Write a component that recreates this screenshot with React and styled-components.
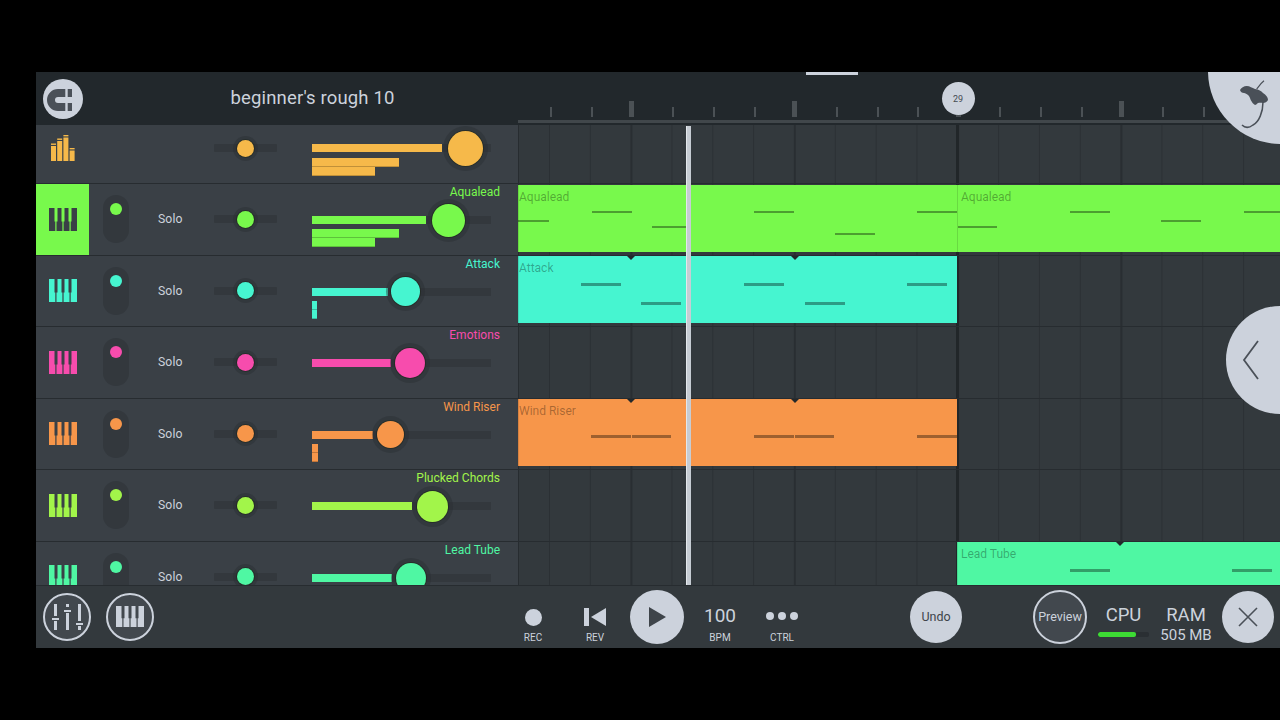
import React from 'react';
import styled, { createGlobalStyle } from 'styled-components';

const Global = createGlobalStyle`
  html, body { margin: 0; padding: 0; background: #000; }
  body { font-family: Roboto, "Liberation Sans", sans-serif; }
  * { box-sizing: border-box; }
`;
const LIGHT = '#ccd2dc';
const Page = styled.div`
  width: 1280px; height: 720px; background: #000; padding: 72px 0 0 36px; overflow: hidden;
`;
const Shell = styled.div`
  position: relative; width: 1244px; height: 576px; overflow: hidden;
  display: flex; flex-direction: column; background: #33393d;
`;
const Header = styled.header`
  height: 53px; flex: none; display: flex; background: #22282c;
`;
const TitleArea = styled.div`
  width: 482px; flex: none; display: flex; align-items: center; padding-left: 7px;
`;
const MagnetButton = styled.button`
  width: 40px; height: 40px; margin: 0 148px 0 0; padding: 0; border: 0; border-radius: 50%;
  background: ${LIGHT}; display: flex;
`;
const Title = styled.h1`
  margin: 0; font-size: 18.5px; font-weight: 400; color: ${LIGHT}; letter-spacing: .15px;
  position: relative; top: -1px; left: -.5px;
`;
const Ruler = styled.div`
  flex: 1; display: flex; flex-direction: column; justify-content: flex-end;
`;
const Ticks = styled.div`
  display: flex; align-items: flex-end; padding-left: 32px; height: 16px; margin-bottom: 3px;
`;
const Tick = styled.span`
  flex: 0 0 40.83px; height: ${p => (p.$major ? 16 : 10)}px; display: block;
  &::before {
    content: ''; display: block; height: 100%; background: #4b5155;
    width: ${p => (p.$major ? 5 : 2)}px; margin-left: ${p => (p.$major ? -2.5 : 0)}px;
  }
`;
const RulerLine = styled.div`
  height: 3px; margin-bottom: 2px; background: #41474b;
`;
const Scrollbar = styled.div`
  position: absolute; left: 770px; top: 0; width: 52px; height: 3px; background: ${LIGHT};
`;
const MarkerBadge = styled.div`
  position: absolute; left: 905.5px; top: 10px; width: 33px; height: 33px; border-radius: 50%;
  background: ${LIGHT}; color: #454b52; font-size: 9px;
  display: flex; align-items: center; justify-content: center;
`;
const LogoDisc = styled.div`
  position: absolute; left: 1172px; top: -74px; width: 146px; height: 146px; border-radius: 50%;
  background: ${LIGHT};
`;
const LogoMark = styled.svg`
  position: absolute; left: 30px; top: 82px; width: 34px; height: 50px;
`;
const BackDisc = styled.div`
  position: absolute; left: 1190px; top: 234px; width: 108px; height: 108px; border-radius: 50%;
  background: ${LIGHT};
`;
const BackChevron = styled.svg`
  position: absolute; left: 16px; top: 34px; width: 18px; height: 40px;
`;
const Main = styled.main`
  position: relative; flex: 1; min-height: 0; overflow: hidden;
`;
const Row = styled.div`
  height: ${p => (p.$master ? 59 : 71.5)}px; display: flex; border-bottom: 1px solid #272c30;
`;
const Channel = styled.div`
  width: 482px; flex: none; background: #3a4046; display: grid; align-items: center;
  grid-template-columns: 53px 69px 56px 98px 188px;
`;
const IconCell = styled.div`
  align-self: stretch; display: flex; align-items: center; justify-content: center;
  padding-bottom: ${p => (p.$master ? 12 : 0)}px;
  background: ${p => (p.$active ? p.$color : 'transparent')};
`;
const Switch = styled.div`
  width: 26px; height: 48px; margin-left: 14px; border-radius: 13px; background: #33383d;
  display: flex; justify-content: center; padding-top: 8px;
`;
const Led = styled.span`
  width: 12px; height: 12px; border-radius: 50%; background: ${p => p.$color};
`;
const Solo = styled.span`
  font-size: 12.2px; color: ${LIGHT}; letter-spacing: .1px;
`;
const Slot = styled.div``;
const PanTrack = styled.div`
  position: relative; width: 63px; height: 8px; background: #33383d; border-radius: 1px;
  margin-top: ${p => (p.$master ? -12 : 0)}px;
`;
const Knob = styled.span`
  position: absolute; top: 4px; left: ${p => p.$x}px; width: ${p => p.$d}px; height: ${p => p.$d}px;
  margin: ${p => -p.$d / 2}px 0 0 ${p => -p.$d / 2}px; border-radius: 50%; background: ${p => p.$color};
  box-shadow: 0 0 0 1px rgba(20,30,10,.35), 0 0 0 ${p => (p.$d > 20 ? 5 : 4)}px rgba(42,47,51,.45);
`;
const Mixer = styled.div`
  align-self: stretch; display: flex; flex-direction: column; padding-top: ${p => (p.$master ? 19 : 1)}px;
`;
const Name = styled.div`
  height: 14px; line-height: 14px; font-size: 12px; text-align: right; color: ${p => p.$color};
  margin-bottom: 17px;
`;
const VolTrack = styled.div`
  position: relative; width: 179px; height: 8px; flex: none; background: #33383d;
  margin-bottom: ${p => p.$gap}px;
`;
const VolFill = styled.div`
  width: ${p => p.$w}px; height: 100%; background: ${p => p.$color};
`;
const SubBar = styled.div`
  width: ${p => p.$w}px; height: ${p => p.$h}px; flex: none; background: ${p => p.$color};
  border-bottom: 1px solid rgba(0,0,0,.22);
`;
const Track = styled.div`
  position: relative; flex: 1; overflow: hidden;
  background-color: #33393d;
  background-image:
    linear-gradient(90deg, #272c30 0 1px, transparent 1px),
    linear-gradient(90deg, #212629 0 3px, transparent 3px),
    linear-gradient(90deg, #292e32 0 2px, transparent 2px),
    linear-gradient(90deg, #2b3034 0 1px, transparent 1px);
  background-size: 100% 100%, 100% 100%, 163.33px 100%, 40.83px 100%;
  background-position: 0 0, 437.5px 0, 112.5px 0, 31px 0;
  background-repeat: no-repeat, no-repeat, repeat-x, repeat-x;
`;
const Clip = styled.div`
  position: absolute; top: .5px; bottom: 3px; left: ${p => p.$x}px; width: ${p => p.$w}px;
  background: ${p => p.$color}; padding: 5px 0 0 ${p => p.$pad}px;
  font-size: 12px; line-height: 14px; color: rgba(0,0,0,.32);
  box-shadow: inset 1px 0 0 rgba(0,0,0,.12);
`;
const Note = styled.span`
  position: absolute; left: ${p => p.$x}px; top: ${p => p.$y - 1}px; width: ${p => p.$w}px; height: 2.5px;
  background: rgba(0,0,0,.36);
`;
const Notch = styled.span`
  position: absolute; left: ${p => p.$x}px; top: 0; width: 0; height: 0; margin-left: -4px;
  border: 4px solid transparent; border-top-color: #23282b; border-bottom: 0;
`;
const Playhead = styled.div`
  position: absolute; left: 650px; top: 1px; bottom: 0; width: 5px; background: #c6ccd3;
  box-shadow: inset 1px 0 0 #e4e8ec;
`;
const Footer = styled.footer`
  height: 63px; flex: none; display: flex; align-items: center; padding: 0 6px 1px 7px;
  background: #33393d; border-top: 1px solid #272c30;
`;
const RingButton = styled.button`
  width: ${p => p.$d}px; height: ${p => p.$d}px; flex: none; padding: 0; margin: 0 ${p => p.$mr}px 0 0;
  border-radius: 50%; border: 2px solid ${LIGHT}; background: #42484e; color: ${LIGHT};
  display: flex; align-items: center; justify-content: center;
  font: 400 12.5px Roboto, sans-serif;
`;
const FillButton = styled.button`
  width: ${p => p.$d}px; height: ${p => p.$d}px; flex: none; padding: 0; margin: 0 ${p => p.$mr}px 0 0;
  border-radius: 50%; border: 0; background: ${LIGHT}; color: #3e444a;
  display: flex; align-items: center; justify-content: center;
  font: 400 12.5px Roboto, sans-serif;
`;
const Transport = styled.div`
  width: 50px; height: 46px; flex: none; margin-right: ${p => p.$mr}px; margin-top: 11px;
  display: flex; flex-direction: column; align-items: center; color: ${LIGHT};
`;
const TransportTop = styled.div`
  height: 32px; display: flex; align-items: center; justify-content: center;
  font-size: 19px;
`;
const TransportLabel = styled.div`
  font-size: 10px; line-height: 12px; color: ${LIGHT}; margin-top: 1px;
`;
const RecDot = styled.span`
  width: 17px; height: 17px; margin-top: 4px; border-radius: 50%; background: ${LIGHT};
`;
const RevIcon = styled.svg`
  width: 22px; height: 18px; margin-top: 4px;
`;
const Dots = styled.div`
  display: flex; gap: 4px; margin-top: 2px;
`;
const Dot = styled.span`
  width: 8px; height: 8px; border-radius: 50%; background: ${LIGHT};
`;
const Spacer = styled.div`
  width: ${p => p.$w}px; flex: none;
`;
const Stat = styled.div`
  flex: none; width: ${p => p.$w}px; margin-right: ${p => p.$mr}px; height: 46px; margin-top: 18px;
  display: flex; flex-direction: column; align-items: center; color: ${LIGHT};
  font-size: 18.5px; line-height: 24px;
`;
const StatSub = styled.div`
  font-size: 15px; line-height: 16px; white-space: nowrap;
`;
const Meter = styled.div`
  width: 51px; height: 5px; margin-top: 5px; border-radius: 2px; background: #2a2f33; overflow: hidden;
`;
const MeterFill = styled.div`
  width: 38px; height: 100%; background: #3ddb34; border-radius: 2px;
`;

const Piano = ({ color, width = 28, height = 23 }) => (
  <svg width={width} height={height} viewBox="0 0 28 24" preserveAspectRatio="none" fill={color}>
    <path d="M0 0H5.5V14H6.3V24H0Z" />
    <path d="M8.5 0H12.5V14H13.4V24H7.5V14H8.5Z" />
    <path d="M15.5 0H19.5V14H20.5V24H14.6V14H15.5Z" />
    <path d="M22.5 0H28V24H21.7V14H22.5Z" />
  </svg>
);
const BarsIcon = ({ color }) => (
  <svg width="24" height="26" viewBox="0 0 24 26" fill={color}>
    <rect x="0" y="8.5" width="5" height="1.4" /><rect x="0" y="11" width="5" height="15" />
    <rect x="6.2" y="3.5" width="5" height="1.4" /><rect x="6.2" y="6" width="5" height="20" />
    <rect x="12.4" y="0" width="5" height="1.4" /><rect x="12.4" y="2.5" width="5" height="23.5" />
    <rect x="18.6" y="13" width="5" height="1.4" /><rect x="18.6" y="15.5" width="5" height="10.5" />
  </svg>
);
const Magnet = () => (
  <svg width="40" height="40" viewBox="0 0 40 40">
    <path d="M22.3 14H15a7 7 0 0 0 0 14h7.3" fill="none" stroke="#4a5058" strokeWidth="8" />
    <rect x="24.7" y="10" width="4.3" height="8" fill="#4a5058" />
    <rect x="24.7" y="24" width="4.3" height="8" fill="#4a5058" />
  </svg>
);
const MixerIcon = () => (
  <svg width="44" height="44" viewBox="0 0 44 44" fill={LIGHT}>
    <rect x="9" y="9" width="3" height="12" /><rect x="7" y="23" width="7" height="2" /><rect x="9" y="26" width="3" height="9" />
    <rect x="21" y="9" width="3" height="3" /><rect x="19" y="15" width="7" height="2" /><rect x="21" y="18" width="3" height="17" />
    <rect x="33" y="9" width="3" height="17" /><rect x="31" y="28" width="7" height="2" /><rect x="33" y="31" width="3" height="4" />
  </svg>
);

const tracks = [
  { name: 'Aqualead', color: '#78f94c', active: true, fill: 114, kx: 136, kd: 33, subs: [[87, 9], [63, 9]],
    clips: [
      { x: 0, w: 439, pad: 1, notes: [[0, 31, 36], [74, 40, 27], [134, 38, 42], [236, 40, 27], [317, 40, 49], [399, 40, 27]], notches: [] },
      { x: 439, w: 323, pad: 4, notes: [[1, 39, 42], [113, 40, 27], [204, 40, 36], [287, 40, 27]], notches: [] },
    ] },
  { name: 'Attack', color: '#46f5d0', fill: 76, kx: 93, kd: 29, subs: [[5, 9], [5, 9]],
    clips: [{ x: 0, w: 439, pad: 1, notes: [[63, 40, 28], [123, 40, 47], [226, 40, 28], [287, 40, 47], [389, 40, 28]], notches: [113, 277] }] },
  { name: 'Emotions', color: '#f74cad', fill: 79, kx: 98, kd: 30, subs: [], clips: [] },
  { name: 'Wind Riser', color: '#f7964a', fill: 61, kx: 78, kd: 27, subs: [[6, 9], [6, 9]],
    clips: [{ x: 0, w: 439, pad: 1, notes: [[73, 40, 37], [114, 39, 37], [236, 40, 37], [277, 39, 37], [399, 40, 37]], notches: [113, 277] }] },
  { name: 'Plucked Chords', color: '#a2f54a', fill: 100, kx: 120, kd: 31, subs: [], clips: [] },
  { name: 'Lead Tube', color: '#4ff7a3', fill: 80, kx: 99, kd: 30, subs: [],
    clips: [{ x: 439, w: 323, pad: 4, notes: [[113, 40, 28], [275, 40, 28]], notches: [163] }] },
];

const YELLOW = '#f6b94a';

export default function App() {
  return (
    <Page>
      <Global />
      <Shell>
        <Header>
          <TitleArea>
            <MagnetButton aria-label="Snap"><Magnet /></MagnetButton>
            <Title>beginner's rough 10</Title>
          </TitleArea>
          <Ruler>
            <Ticks>
              {Array.from({ length: 19 }, (_, i) => <Tick key={i} $major={i % 4 === 2} />)}
            </Ticks>
            <RulerLine />
          </Ruler>
        </Header>
        <Main>
          <Row $master>
            <Channel>
              <IconCell $master><BarsIcon color={YELLOW} /></IconCell>
              <Slot /><Slot />
              <PanTrack $master><Knob $x={31.5} $d={17} $color={YELLOW} /></PanTrack>
              <Mixer $master>
                <VolTrack $gap={6}>
                  <VolFill $w={130} $color={YELLOW} />
                  <Knob $x={153} $d={35} $color={YELLOW} />
                </VolTrack>
                <SubBar $w={87} $h={9} $color={YELLOW} />
                <SubBar $w={63} $h={9} $color={YELLOW} />
              </Mixer>
            </Channel>
            <Track />
          </Row>
          {tracks.map(t => (
            <Row key={t.name}>
              <Channel>
                <IconCell $active={t.active} $color={t.color}>
                  <Piano color={t.active ? '#3a4046' : t.color} />
                </IconCell>
                <Switch><Led $color={t.color} /></Switch>
                <Solo>Solo</Solo>
                <PanTrack><Knob $x={31.5} $d={17} $color={t.color} /></PanTrack>
                <Mixer>
                  <Name $color={t.color}>{t.name}</Name>
                  <VolTrack $gap={5}>
                    <VolFill $w={t.fill} $color={t.color} />
                    <Knob $x={t.kx} $d={t.kd} $color={t.color} />
                  </VolTrack>
                  {t.subs.map(([w, h], i) => <SubBar key={i} $w={w} $h={h} $color={t.color} />)}
                </Mixer>
              </Channel>
              <Track>
                {t.clips.map(c => (
                  <Clip key={c.x} $x={c.x} $w={c.w} $pad={c.pad} $color={t.color}>
                    {t.name}
                    {c.notes.map(([x, w, y]) => <Note key={x} $x={x} $w={w} $y={y} />)}
                    {c.notches.map(x => <Notch key={x} $x={x} />)}
                  </Clip>
                ))}
              </Track>
            </Row>
          ))}
          <Playhead />
        </Main>
        <Footer>
          <RingButton $d={48} $mr={15} aria-label="Mixer"><MixerIcon /></RingButton>
          <RingButton $d={48} $mr={0} aria-label="Piano"><Piano color={LIGHT} width={28} height={21} /></RingButton>
          <Spacer $w={354} />
          <Transport $mr={12}>
            <TransportTop><RecDot /></TransportTop>
            <TransportLabel>REC</TransportLabel>
          </Transport>
          <Transport $mr={10}>
            <TransportTop>
              <RevIcon viewBox="0 0 22 18" fill={LIGHT}>
                <rect x="0" y="0" width="5" height="18" /><path d="M22 0V18L7 9Z" />
              </RevIcon>
            </TransportTop>
            <TransportLabel>REV</TransportLabel>
          </Transport>
          <FillButton $d={54} $mr={11} aria-label="Play">
            <svg width="18" height="20" viewBox="0 0 18 20" fill="#3e444a"><path d="M1 0L18 10L1 20Z" /></svg>
          </FillButton>
          <Transport $mr={12}>
            <TransportTop>100</TransportTop>
            <TransportLabel>BPM</TransportLabel>
          </Transport>
          <Transport $mr={103}>
            <TransportTop><Dots><Dot /><Dot /><Dot /></Dots></TransportTop>
            <TransportLabel>CTRL</TransportLabel>
          </Transport>
          <FillButton $d={52} $mr={71}>Undo</FillButton>
          <RingButton $d={54} $mr={11}>Preview</RingButton>
          <Stat $w={51} $mr={11}>
            CPU
            <Meter><MeterFill /></Meter>
          </Stat>
          <Stat $w={52} $mr={10}>
            RAM
            <StatSub>505 MB</StatSub>
          </Stat>
          <FillButton $d={52} $mr={0} aria-label="Close">
            <svg width="22" height="22" viewBox="0 0 22 22" fill="none" stroke="#4a5058" strokeWidth="1.6">
              <path d="M2 2L20 20M20 2L2 20" />
            </svg>
          </FillButton>
        </Footer>
        <Scrollbar />
        <MarkerBadge>29</MarkerBadge>
        <LogoDisc>
          <LogoMark viewBox="0 0 34 50">
            <path d="M2 10C3 8 6 6 8.7 6C12 6 14 8 17 9C21 9.5 23 11 25 13C28 15 30 17 30 20C29 22 27 23 25 23C23 22.5 21.5 22.5 20 23C18.5 24 18 25 17 25C15 24 14 22 12.7 20C12 18 11.5 16 10 15C8.5 14 7.5 13 6 13C4 13 2.5 12 2 10Z" fill="#4a5058" />
            <path d="M26 .7C23 3 21 6 18.7 9" fill="none" stroke="#4a5058" strokeWidth="1.2" />
            <path d="M25 22C25 32 21 42 15 45C11 48 7 48 4 45" fill="none" stroke="#4a5058" strokeWidth="1.5" />
          </LogoMark>
        </LogoDisc>
        <BackDisc>
          <BackChevron viewBox="0 0 18 40">
            <path d="M16 1L2 20L16 39" fill="none" stroke="#4a5058" strokeWidth="1.8" />
          </BackChevron>
        </BackDisc>
      </Shell>
    </Page>
  );
}
